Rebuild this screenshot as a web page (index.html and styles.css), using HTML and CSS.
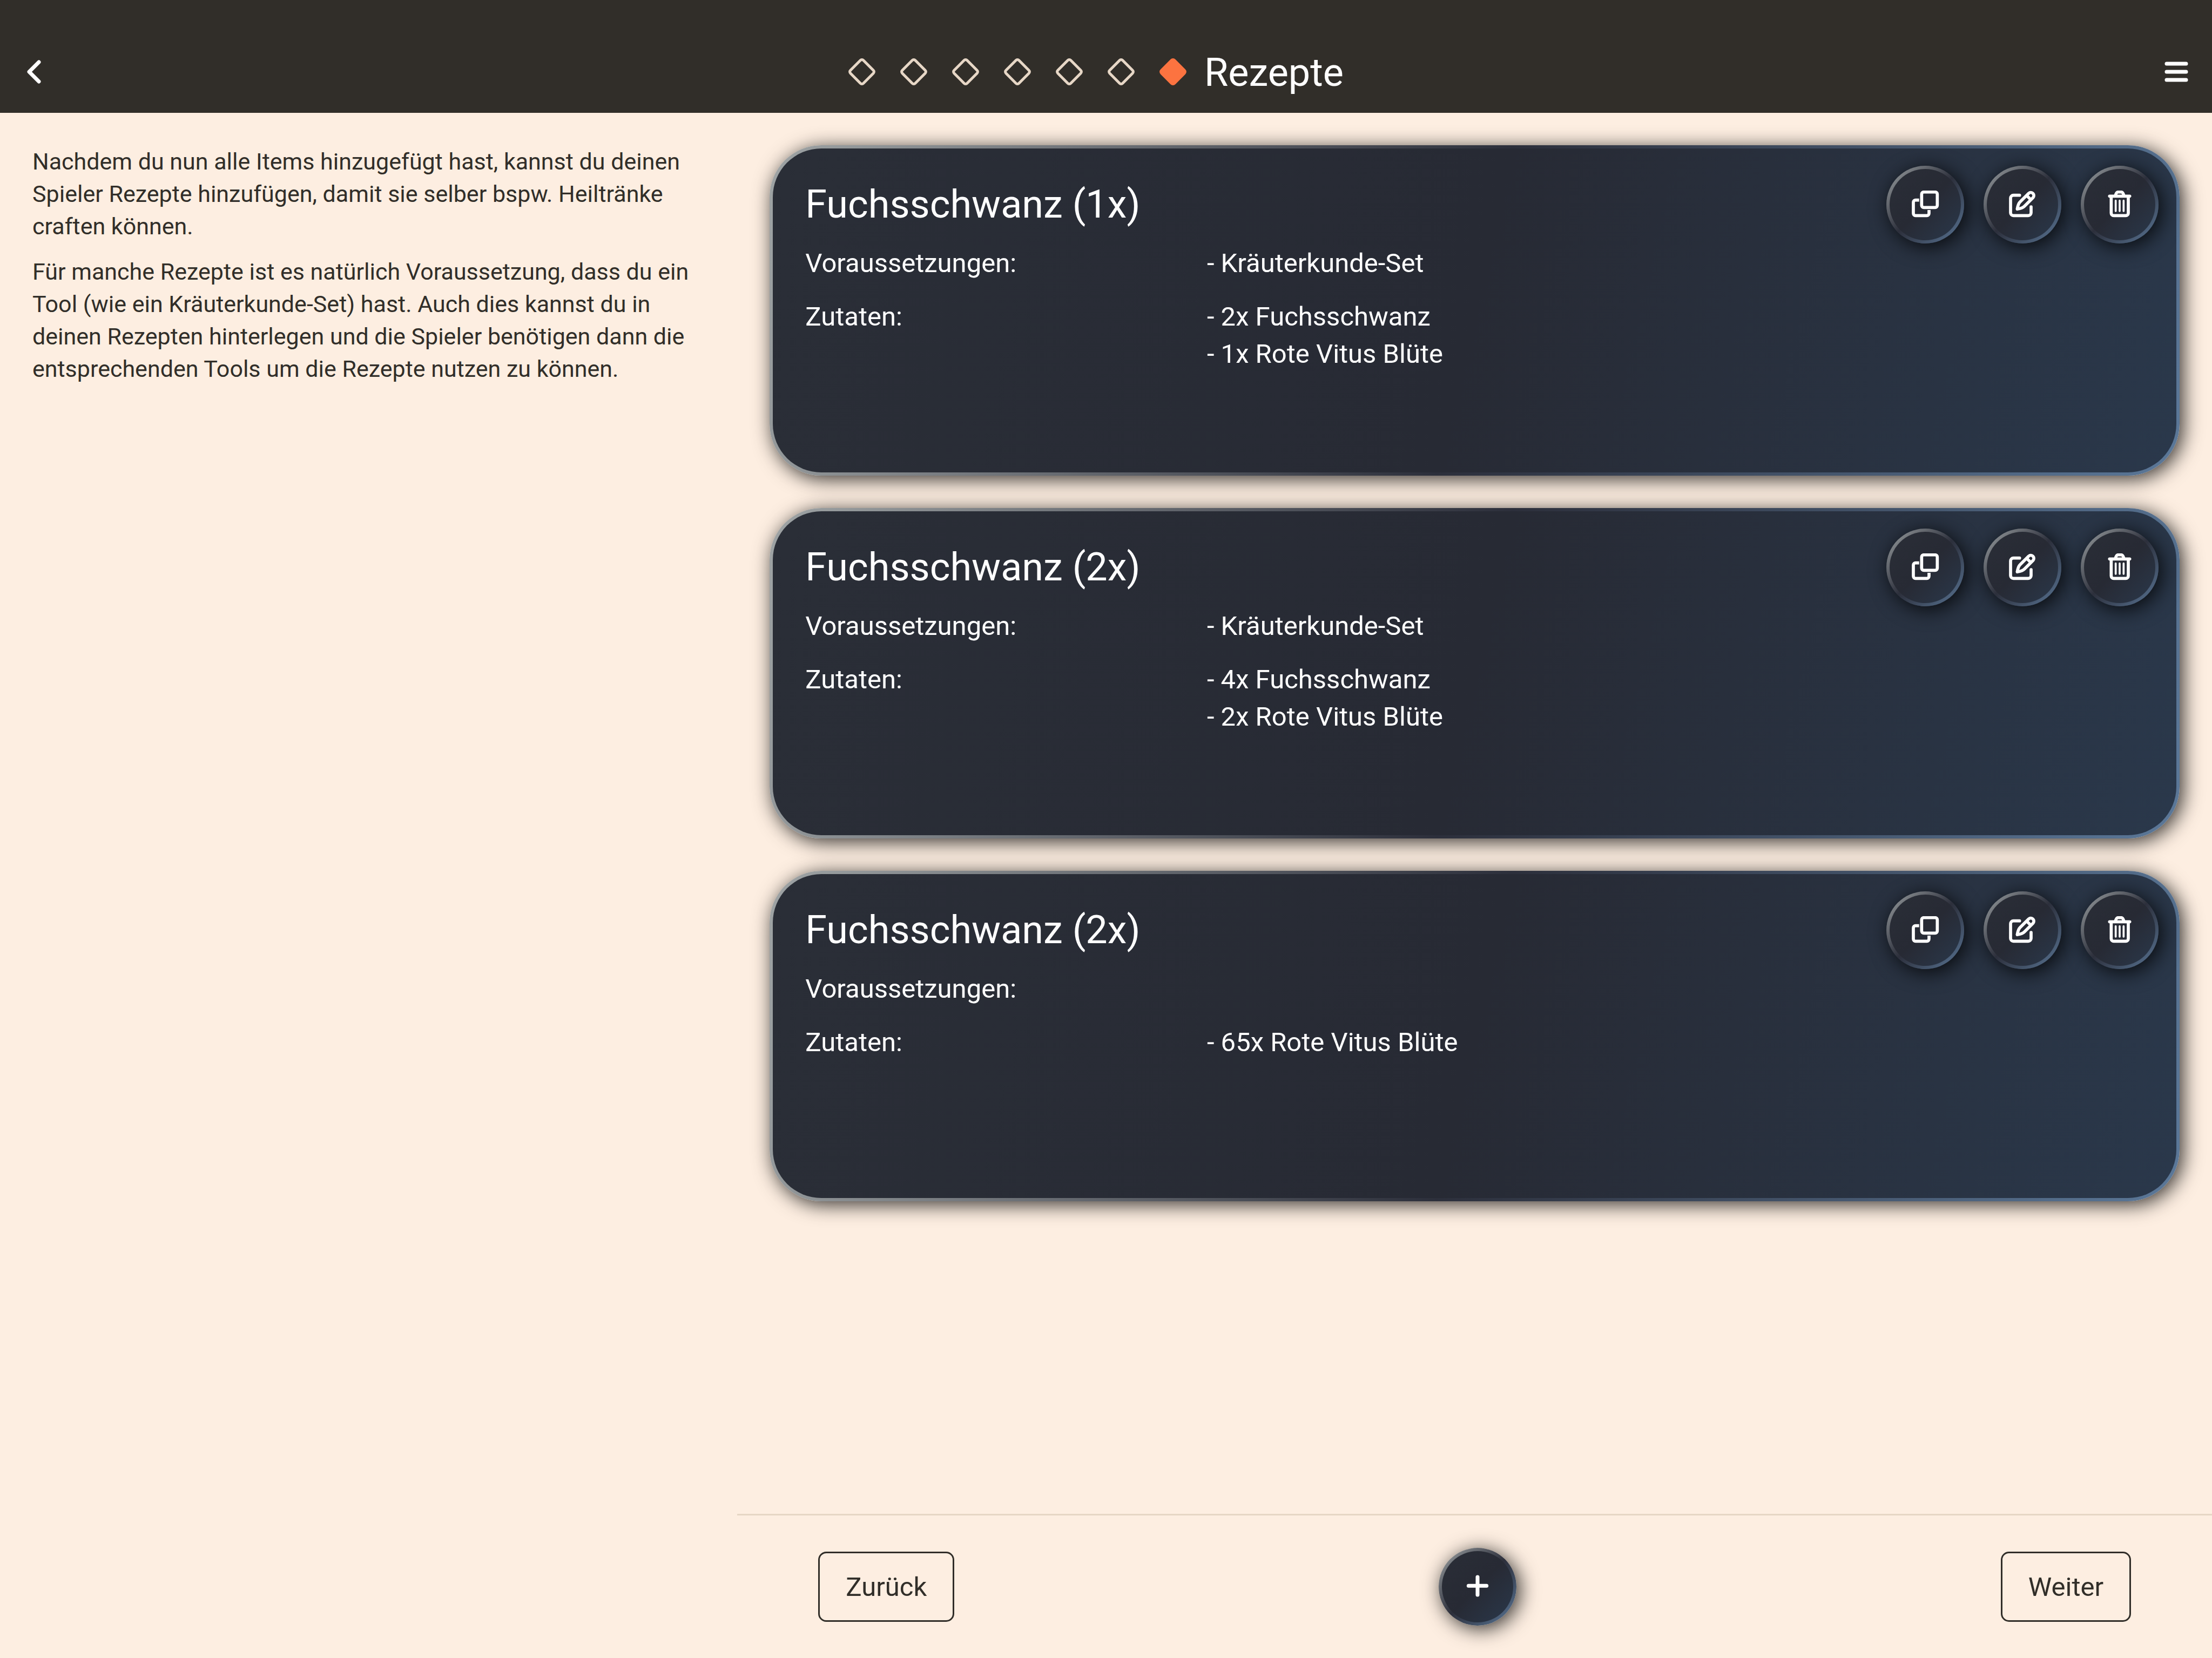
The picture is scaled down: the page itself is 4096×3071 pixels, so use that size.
FILE: index.html
```html
<!DOCTYPE html>
<html lang="de">
<head>
  <meta charset="utf-8">
  <meta name="viewport" content="width=device-width, initial-scale=1">
  <title>Rezepte</title>
  <link rel="stylesheet" href="styles.css">
</head>
<body>
  <svg class="sprite" aria-hidden="true">
    <symbol id="icon-copy" viewBox="-6 -6 156 156">
      <rect x="52" y="2" width="87" height="86" rx="12"/>
      <path d="M38 47H18A12 12 0 0 0 6 59V121A12 12 0 0 0 18 133H81A12 12 0 0 0 93 121V102"/>
    </symbol>
    <symbol id="icon-edit" viewBox="-6 -6 156 156">
      <path stroke-linecap="round" d="M56 20H22A16 16 0 0 0 6 36V117A16 16 0 0 0 22 133H104A16 16 0 0 0 120 117V84"/>
      <path stroke-linejoin="round" d="M107 9A17 17 0 0 1 131 33L83 81C76 88 60 94 43 97C46 80 50 66 58 58ZM95 21L119 45"/>
    </symbol>
    <symbol id="icon-trash" viewBox="-6 -6 156 156">
      <path stroke-linecap="round" d="M16 25H128"/>
      <path d="M48 25C51 10 56 2 64 2H80C88 2 93 10 96 25M25 25V119A14 14 0 0 0 39 133H106A14 14 0 0 0 120 119V25"/>
      <path stroke-linecap="round" stroke-width="11" d="M50 50V108M72 50V108M94 50V108"/>
    </symbol>
    <symbol id="icon-plus" viewBox="-6 -6 156 156">
      <path stroke-linecap="round" stroke-width="21" d="M72 18V117M22 67H122"/>
    </symbol>
    <symbol id="step" viewBox="0 0 56 56">
      <rect x="11" y="11" width="34" height="34" rx="4" transform="rotate(45 28 28)"/>
    </symbol>
  </svg>

  <div class="app">
    <header class="topbar">
      <button class="bar-button" type="button" aria-label="Zurück zur Übersicht">
        <svg class="chevron" viewBox="0 0 26 44"><path d="M22 4L4 22L22 40"/></svg>
      </button>
      <div class="progress">
        <ol class="steps">
          <li><svg><use href="#step"/></svg></li>
          <li><svg><use href="#step"/></svg></li>
          <li><svg><use href="#step"/></svg></li>
          <li><svg><use href="#step"/></svg></li>
          <li><svg><use href="#step"/></svg></li>
          <li><svg><use href="#step"/></svg></li>
          <li class="current" aria-current="step"><svg><use href="#step"/></svg></li>
        </ol>
        <h1 class="title">Rezepte</h1>
      </div>
      <button class="bar-button menu" type="button" aria-label="Menü">
        <svg class="burger" viewBox="0 0 44 38"><path d="M4 4H40M4 19H40M4 34H40"/></svg>
      </button>
    </header>

    <div class="content">
      <aside class="help">
        <p>Nachdem du nun alle Items hinzugefügt hast, kannst du deinen Spieler Rezepte hinzufügen, damit sie selber bspw. Heiltränke craften können.</p>
        <p>Für manche Rezepte ist es natürlich Voraussetzung, dass du ein Tool (wie ein Kräuterkunde-Set) hast. Auch dies kannst du in deinen Rezepten hinterlegen und die Spieler benötigen dann die entsprechenden Tools um die Rezepte nutzen zu können.</p>
      </aside>

      <main class="main">
        <div class="recipes">
          <article class="card">
            <div class="card-body">
              <h2>Fuchsschwanz (1x)</h2>
              <dl>
                <dt>Voraussetzungen:</dt>
                <dd><span>- Kräuterkunde-Set</span></dd>
                <dt>Zutaten:</dt>
                <dd><span>- 2x Fuchsschwanz</span><span>- 1x Rote Vitus Blüte</span></dd>
              </dl>
            </div>
            <div class="actions">
              <button class="round" type="button" aria-label="Kopieren"><svg><use href="#icon-copy"/></svg></button>
              <button class="round" type="button" aria-label="Bearbeiten"><svg><use href="#icon-edit"/></svg></button>
              <button class="round" type="button" aria-label="Löschen"><svg><use href="#icon-trash"/></svg></button>
            </div>
          </article>

          <article class="card">
            <div class="card-body">
              <h2>Fuchsschwanz (2x)</h2>
              <dl>
                <dt>Voraussetzungen:</dt>
                <dd><span>- Kräuterkunde-Set</span></dd>
                <dt>Zutaten:</dt>
                <dd><span>- 4x Fuchsschwanz</span><span>- 2x Rote Vitus Blüte</span></dd>
              </dl>
            </div>
            <div class="actions">
              <button class="round" type="button" aria-label="Kopieren"><svg><use href="#icon-copy"/></svg></button>
              <button class="round" type="button" aria-label="Bearbeiten"><svg><use href="#icon-edit"/></svg></button>
              <button class="round" type="button" aria-label="Löschen"><svg><use href="#icon-trash"/></svg></button>
            </div>
          </article>

          <article class="card">
            <div class="card-body">
              <h2>Fuchsschwanz (2x)</h2>
              <dl>
                <dt>Voraussetzungen:</dt>
                <dd></dd>
                <dt>Zutaten:</dt>
                <dd><span>- 65x Rote Vitus Blüte</span></dd>
              </dl>
            </div>
            <div class="actions">
              <button class="round" type="button" aria-label="Kopieren"><svg><use href="#icon-copy"/></svg></button>
              <button class="round" type="button" aria-label="Bearbeiten"><svg><use href="#icon-edit"/></svg></button>
              <button class="round" type="button" aria-label="Löschen"><svg><use href="#icon-trash"/></svg></button>
            </div>
          </article>
        </div>

        <footer class="footer">
          <button class="outlined" type="button">Zurück</button>
          <button class="round" type="button" aria-label="Rezept hinzufügen"><svg><use href="#icon-plus"/></svg></button>
          <button class="outlined" type="button">Weiter</button>
        </footer>
      </main>
    </div>
  </div>
</body>
</html>
```

FILE: styles.css
```css
:root {
  --dark: #312e29;
  --paper: #fdeee1;
  --line: #e6d6c5;
  --accent: #fc7340;
  --text-s: 43px;
  --text-m: 49px;
  --text-l: 72px;
  --fill: #2a2e37, #272a34 50%, #2a384b;
  --rim: #9fa4a5, #2c2f3b 50%, #5b7899;
  --shadow: 6px 6px 36px rgba(0, 0, 0, 0.8);
}

* {
  box-sizing: border-box;
}

body {
  margin: 0;
  background: var(--paper);
  color: var(--dark);
  font-family: Roboto, "Liberation Sans", sans-serif;
  font-size: var(--text-m);
}

h1, h2, p, dl, dd, ol {
  margin: 0;
  padding: 0;
  font-weight: 400;
}

button {
  margin: 0;
  padding: 0;
  border: 0;
  background: none;
  color: inherit;
  font: inherit;
}

svg {
  display: block;
  fill: none;
  stroke: currentColor;
}

.sprite {
  position: absolute;
  width: 0;
  height: 0;
}

.app {
  display: flex;
  flex-direction: column;
  min-height: 100vh;
}

/* Top bar */
.topbar {
  display: grid;
  grid-template-columns: 1fr auto 1fr;
  align-items: center;
  padding: 60px 42px 4px;
  background: var(--dark);
  color: #fff;
  position: relative;
}

.bar-button {
  justify-self: start;
  padding: 8px;
}

.bar-button.menu {
  justify-self: end;
  padding: 0 2px;
}

.chevron {
  width: 26px;
  height: 44px;
  stroke-width: 7;
  stroke-linecap: round;
  stroke-linejoin: round;
}

.burger {
  width: 44px;
  height: 38px;
  stroke-width: 7;
  stroke-linecap: round;
}

.progress {
  display: flex;
  align-items: center;
}

.steps {
  display: flex;
  list-style: none;
  color: #e7d7c6;
}

.steps li {
  display: grid;
  place-items: center;
  width: 96px;
}

.steps svg {
  width: 56px;
  height: 56px;
  stroke-width: 5;
}

.steps .current {
  color: var(--accent);
}

.steps .current svg {
  fill: currentColor;
}

.title {
  padding: 4px 60px 0 10px;
  font-size: var(--text-l);
  line-height: 141px;
}

/* Page columns */
.content {
  display: grid;
  grid-template-columns: 1fr 2fr;
  flex: 1;
}

.help {
  display: flex;
  flex-direction: column;
  gap: 24px;
  padding: 60px;
  font-size: var(--text-s);
  line-height: 60px;
}

.main {
  display: flex;
  flex-direction: column;
}

.recipes {
  display: flex;
  flex: 1;
  flex-direction: column;
  gap: 60px;
  padding: 60px;
}

/* Recipe card */
.card {
  position: relative;
  min-height: 612px;
  padding: 60px;
  border: 6px solid transparent;
  border-radius: 96px;
  background:
    linear-gradient(103deg, var(--fill)) padding-box,
    linear-gradient(103deg, var(--rim)) border-box;
  box-shadow: var(--shadow);
  color: #fff;
}

.card h2 {
  margin-bottom: 30px;
  font-size: var(--text-l);
  line-height: 88px;
}

.card dl {
  display: grid;
  grid-template-columns: 30% 1fr;
  row-gap: 30px;
  line-height: 69px;
}

.card dd span {
  display: block;
}

.actions {
  position: absolute;
  top: 32px;
  right: 33px;
  display: flex;
  gap: 36px;
}

.round {
  display: grid;
  place-items: center;
  width: 144px;
  height: 144px;
  border: 6px solid transparent;
  border-radius: 50%;
  background:
    linear-gradient(135deg, var(--fill)) padding-box,
    linear-gradient(135deg, var(--rim)) border-box;
  box-shadow: var(--shadow);
  color: #fff;
}

.round svg {
  width: 52px;
  height: 52px;
  stroke-width: 17;
}

/* Footer */
.footer {
  display: flex;
  align-items: center;
  justify-content: space-between;
  padding: 60px 150px;
  border-top: 3px solid var(--line);
}

.outlined {
  height: 130px;
  padding: 0 48px;
  border: 3px solid var(--dark);
  border-radius: 15px;
}
```
